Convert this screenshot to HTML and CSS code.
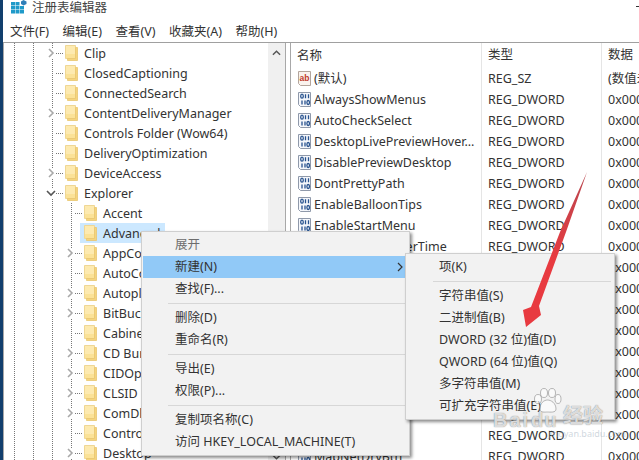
FILE: index.html
```html
<!DOCTYPE html>
<html lang="zh">
<head>
<meta charset="utf-8">
<title>注册表编辑器</title>
<link rel="stylesheet" href="styles.css">
</head>
<body>
<svg class="defs" width="0" height="0">
  <symbol id="folder" viewBox="0 0 13 16">
    <path d="M0.5 0.5H10.5V13.5H0.5Z" fill="#fdeab0" stroke="#efd795"/>
    <path d="M10.5 2.5H12.5V15.5H2.5V13.5H10.5Z" fill="#f5d47e" stroke="#e8c670" stroke-width="0.8"/>
    <path d="M1 9H10V13H1Z" fill="#fbe297"/>
  </symbol>
  <symbol id="bin" viewBox="0 0 15 17">
    <path d="M1.5 1.5H13.5V15.5H3.5L1.5 13.5Z" fill="#f5f7fb" stroke="#8f99aa"/>
    <g fill="none" stroke="#27528e" stroke-width="1.3">
      <ellipse cx="5" cy="5.2" rx="1.3" ry="2"/>
      <path d="M8.5 3.2V7.2M11.5 3.2V7.2"/>
      <path d="M5 9.6V13.4M8 9.6V13.4"/>
      <ellipse cx="11.2" cy="11.5" rx="1.3" ry="2"/>
    </g>
  </symbol>
  <symbol id="str" viewBox="0 0 15 17">
    <path d="M1.5 1.5H13.5V15.5H3.5L1.5 13.5Z" fill="#faf3ee" stroke="#b3a59c"/>
    <text x="7.5" y="10.5" class="ab-text" text-anchor="middle">ab</text>
  </symbol>
</svg>

<div class="strip"></div>
<div class="window">
  <header class="titlebar">
    <svg class="app-icon" width="16" height="14" viewBox="0 0 16 14">
      <path d="M0 2H4V5.5H0ZM4.5 2H8.5V5.5H4.5ZM0 6H4V9.5H0ZM4.5 6H8.5V9.5H4.5ZM9 6H13V9.5H9ZM0 10H4V13.5H0ZM4.5 10H8.5V13.5H4.5ZM9 10H13V13.5H9Z" fill="#1f9ac9"/>
      <path d="M10 1.5L12.5 0L15.5 1.5V4L12.5 5.5L10 4Z" fill="#2f7fb8"/>
    </svg>
    <span class="title">注册表编辑器</span>
    <span class="minimize"></span>
  </header>
  <nav class="menubar">
    <span>文件(F)</span><span>编辑(E)</span><span>查看(V)</span><span>收藏夹(A)</span><span>帮助(H)</span>
  </nav>
  <main class="panes">
    <section class="treepane">
      <div class="tree">
        <div class="row l1"><svg class="exp" viewBox="0 0 10 10"><path d="M3 1L7 5L3 9"/></svg><i class="dots"></i><svg class="folder"><use href="#folder"/></svg><span>Clip</span></div>
        <div class="row l1"><i class="exp"></i><i class="dots"></i><svg class="folder"><use href="#folder"/></svg><span>ClosedCaptioning</span></div>
        <div class="row l1"><i class="exp"></i><i class="dots"></i><svg class="folder"><use href="#folder"/></svg><span>ConnectedSearch</span></div>
        <div class="row l1"><svg class="exp" viewBox="0 0 10 10"><path d="M3 1L7 5L3 9"/></svg><i class="dots"></i><svg class="folder"><use href="#folder"/></svg><span>ContentDeliveryManager</span></div>
        <div class="row l1"><i class="exp"></i><i class="dots"></i><svg class="folder"><use href="#folder"/></svg><span>Controls Folder (Wow64)</span></div>
        <div class="row l1"><i class="exp"></i><i class="dots"></i><svg class="folder"><use href="#folder"/></svg><span>DeliveryOptimization</span></div>
        <div class="row l1"><svg class="exp" viewBox="0 0 10 10"><path d="M3 1L7 5L3 9"/></svg><i class="dots"></i><svg class="folder"><use href="#folder"/></svg><span>DeviceAccess</span></div>
        <div class="row l1"><svg class="exp open" viewBox="0 0 10 10"><path d="M1 3L5 7L9 3"/></svg><i class="dots"></i><svg class="folder"><use href="#folder"/></svg><span>Explorer</span></div>
        <div class="row l2"><i class="exp"></i><i class="dots"></i><svg class="folder"><use href="#folder"/></svg><span>Accent</span></div>
        <div class="row l2 selected"><i class="exp"></i><i class="dots"></i><svg class="folder"><use href="#folder"/></svg><span>Advanced</span></div>
        <div class="row l2"><svg class="exp" viewBox="0 0 10 10"><path d="M3 1L7 5L3 9"/></svg><i class="dots"></i><svg class="folder"><use href="#folder"/></svg><span>AppContract</span></div>
        <div class="row l2"><i class="exp"></i><i class="dots"></i><svg class="folder"><use href="#folder"/></svg><span>AutoComplete</span></div>
        <div class="row l2"><svg class="exp" viewBox="0 0 10 10"><path d="M3 1L7 5L3 9"/></svg><i class="dots"></i><svg class="folder"><use href="#folder"/></svg><span>AutoplayHandlers</span></div>
        <div class="row l2"><svg class="exp" viewBox="0 0 10 10"><path d="M3 1L7 5L3 9"/></svg><i class="dots"></i><svg class="folder"><use href="#folder"/></svg><span>BitBucket</span></div>
        <div class="row l2"><i class="exp"></i><i class="dots"></i><svg class="folder"><use href="#folder"/></svg><span>CabinetState</span></div>
        <div class="row l2"><svg class="exp" viewBox="0 0 10 10"><path d="M3 1L7 5L3 9"/></svg><i class="dots"></i><svg class="folder"><use href="#folder"/></svg><span>CD Burning</span></div>
        <div class="row l2"><svg class="exp" viewBox="0 0 10 10"><path d="M3 1L7 5L3 9"/></svg><i class="dots"></i><svg class="folder"><use href="#folder"/></svg><span>CIDOpen</span></div>
        <div class="row l2"><svg class="exp" viewBox="0 0 10 10"><path d="M3 1L7 5L3 9"/></svg><i class="dots"></i><svg class="folder"><use href="#folder"/></svg><span>CLSID</span></div>
        <div class="row l2"><svg class="exp" viewBox="0 0 10 10"><path d="M3 1L7 5L3 9"/></svg><i class="dots"></i><svg class="folder"><use href="#folder"/></svg><span>ComDlg32</span></div>
        <div class="row l2"><i class="exp"></i><i class="dots"></i><svg class="folder"><use href="#folder"/></svg><span>ControlPanel</span></div>
        <div class="row l2"><svg class="exp" viewBox="0 0 10 10"><path d="M3 1L7 5L3 9"/></svg><i class="dots"></i><svg class="folder"><use href="#folder"/></svg><span>Desktop</span></div>
      </div>
      <div class="scrollbar">
        <svg class="scroll-arrow" viewBox="0 0 10 6"><path d="M1 5L5 1L9 5"/></svg>
        <svg class="scroll-arrow" viewBox="0 0 10 6"><path d="M1 1L5 5L9 1"/></svg>
      </div>
    </section>
    <section class="listpane">
      <div class="lrow head"><div class="c-name">名称</div><div class="c-type">类型</div><div class="c-data">数据</div></div>
      <div class="lrow"><div class="c-name"><svg class="regicon"><use href="#str"/></svg>(默认)</div><div class="c-type">REG_SZ</div><div class="c-data">(数值未设置)</div></div>
      <div class="lrow"><div class="c-name"><svg class="regicon"><use href="#bin"/></svg>AlwaysShowMenus</div><div class="c-type">REG_DWORD</div><div class="c-data">0x00000000 (0)</div></div>
      <div class="lrow"><div class="c-name"><svg class="regicon"><use href="#bin"/></svg>AutoCheckSelect</div><div class="c-type">REG_DWORD</div><div class="c-data">0x00000000 (0)</div></div>
      <div class="lrow"><div class="c-name"><svg class="regicon"><use href="#bin"/></svg>DesktopLivePreviewHover...</div><div class="c-type">REG_DWORD</div><div class="c-data">0x00000000 (0)</div></div>
      <div class="lrow"><div class="c-name"><svg class="regicon"><use href="#bin"/></svg>DisablePreviewDesktop</div><div class="c-type">REG_DWORD</div><div class="c-data">0x00000000 (0)</div></div>
      <div class="lrow"><div class="c-name"><svg class="regicon"><use href="#bin"/></svg>DontPrettyPath</div><div class="c-type">REG_DWORD</div><div class="c-data">0x00000000 (0)</div></div>
      <div class="lrow"><div class="c-name"><svg class="regicon"><use href="#bin"/></svg>EnableBalloonTips</div><div class="c-type">REG_DWORD</div><div class="c-data">0x00000001 (1)</div></div>
      <div class="lrow"><div class="c-name"><svg class="regicon"><use href="#bin"/></svg>EnableStartMenu</div><div class="c-type">REG_DWORD</div><div class="c-data">0x00000001 (1)</div></div>
      <div class="lrow"><div class="c-name"><svg class="regicon"><use href="#bin"/></svg>ExtendedUIHoverTime</div><div class="c-type">REG_DWORD</div><div class="c-data">0x00000190 (400)</div></div>
      <div class="lrow"><div class="c-name"><svg class="regicon"><use href="#bin"/></svg>Filter</div><div class="c-type">REG_DWORD</div><div class="c-data">0x00000000 (0)</div></div>
      <div class="lrow"><div class="c-name"><svg class="regicon"><use href="#bin"/></svg>Hidden</div><div class="c-type">REG_DWORD</div><div class="c-data">0x00000002 (2)</div></div>
      <div class="lrow"><div class="c-name"><svg class="regicon"><use href="#bin"/></svg>HideDrivesWithNoMedia</div><div class="c-type">REG_DWORD</div><div class="c-data">0x00000001 (1)</div></div>
      <div class="lrow"><div class="c-name"><svg class="regicon"><use href="#bin"/></svg>HideFileExt</div><div class="c-type">REG_DWORD</div><div class="c-data">0x00000001 (1)</div></div>
      <div class="lrow"><div class="c-name"><svg class="regicon"><use href="#bin"/></svg>HideIcons</div><div class="c-type">REG_DWORD</div><div class="c-data">0x00000000 (0)</div></div>
      <div class="lrow"><div class="c-name"><svg class="regicon"><use href="#bin"/></svg>IconsOnly</div><div class="c-type">REG_DWORD</div><div class="c-data">0x00000000 (0)</div></div>
      <div class="lrow"><div class="c-name"><svg class="regicon"><use href="#bin"/></svg>LaunchTo</div><div class="c-type">REG_DWORD</div><div class="c-data">0x00000001 (1)</div></div>
      <div class="lrow"><div class="c-name"><svg class="regicon"><use href="#bin"/></svg>ListviewAlphaSelect</div><div class="c-type">REG_DWORD</div><div class="c-data">0x00000001 (1)</div></div>
      <div class="lrow"><div class="c-name"><svg class="regicon"><use href="#bin"/></svg>ListviewShadow</div><div class="c-type">REG_DWORD</div><div class="c-data">0x00000001 (1)</div></div>
      <div class="lrow"><div class="c-name"><svg class="regicon"><use href="#bin"/></svg>MapNetDrvBtn</div><div class="c-type">REG_DWORD</div><div class="c-data">0x00000000 (0)</div></div>
    </section>
  </main>
</div>

<div class="menu context">
  <div class="item muted">展开</div>
  <div class="item active">新建(N)<svg class="caret" viewBox="0 0 6 10"><path d="M1 1L5 5L1 9"/></svg></div>
  <div class="item">查找(F)...</div>
  <div class="sep"></div>
  <div class="item">删除(D)</div>
  <div class="item">重命名(R)</div>
  <div class="sep"></div>
  <div class="item">导出(E)</div>
  <div class="item">权限(P)...</div>
  <div class="sep"></div>
  <div class="item">复制项名称(C)</div>
  <div class="item">访问 HKEY_LOCAL_MACHINE(T)</div>
</div>

<div class="menu submenu">
  <div class="item">项(K)</div>
  <div class="sep"></div>
  <div class="item">字符串值(S)</div>
  <div class="item">二进制值(B)</div>
  <div class="item">DWORD (32 位)值(D)</div>
  <div class="item">QWORD (64 位)值(Q)</div>
  <div class="item">多字符串值(M)</div>
  <div class="item">可扩充字符串值(E)</div>
</div>

<svg class="arrow" width="639" height="460" viewBox="0 0 639 460">
  <defs>
    <linearGradient id="arrowfade" x1="0" y1="172" x2="0" y2="260" gradientUnits="userSpaceOnUse">
      <stop offset="0" stop-color="#b9474f"/>
      <stop offset="1" stop-color="#e83a40"/>
    </linearGradient>
  </defs>
  <path d="M587 172L566 232L539 306L541 315L526 327L523 310L531 307L560 232Z" fill="url(#arrowfade)"/>
</svg>

<div class="watermark">
  <svg class="paw" width="30" height="26" viewBox="0 0 30 26">
    <g fill="#ffffff" fill-opacity="0.6" stroke="#8a8a8a" stroke-opacity="0.6">
      <ellipse cx="6" cy="11" rx="3.5" ry="4.5"/>
      <ellipse cx="12" cy="5" rx="3.5" ry="4.5"/>
      <ellipse cx="20" cy="5" rx="3.5" ry="4.5"/>
      <ellipse cx="26" cy="11" rx="3" ry="4.5"/>
      <path d="M8 21C8 15 12 12 15.5 12C19 12 24 15 24 21C24 25 18 24 15.5 24C13 24 8 25 8 21Z"/>
    </g>
  </svg>
  <span class="wm-text bai">Bai</span>
  <span class="wm-text du">du</span>
  <span class="wm-text jy">经验</span>
  <span class="wm-url">jingyan.baidu.com</span>
</div>
</body>
</html>
```

FILE: styles.css
```css
* { box-sizing: border-box; }

html, body {
  margin: 0;
  height: 460px;
  overflow: hidden;
}

body {
  display: flex;
  position: relative;
  width: 639px;
  background: #fff;
  color: #333;
  font-family: "Noto Sans", "Noto Sans CJK SC", sans-serif;
  font-size: 12.5px;
}

.defs { position: absolute; }

.strip {
  width: 3px;
  flex: none;
  background: #123f6d;
}

.window {
  flex: 1;
  min-width: 0;
  height: 460px;
  display: flex;
  flex-direction: column;
}

.titlebar {
  height: 22px;
  flex: none;
  display: flex;
  align-items: flex-start;
  padding-left: 8px;
}

.app-icon { flex: none; }

.title {
  margin: 1px 0 0 5px;
  line-height: 14px;
  color: #444;
}

.minimize {
  width: 3px;
  height: 1px;
  margin: 6px 0 0 auto;
  background: #333;
}

.menubar {
  height: 20px;
  flex: none;
  display: flex;
  gap: 13.5px;
  padding-left: 7px;
  align-items: center;
  line-height: 20px;
}

.panes {
  flex: 1;
  min-height: 0;
  display: flex;
  border-top: 1px solid #a0a0a0;
}

.treepane {
  width: 283px;
  flex: none;
  display: flex;
  border-left: 1px solid #a8a8a8;
  border-right: 1px solid #a8a8a8;
}

.tree {
  width: 264px;
  flex: none;
  overflow: hidden;
  background-image:
    repeating-linear-gradient(to bottom, #777 0 1px, transparent 1px 2px),
    repeating-linear-gradient(to bottom, #777 0 1px, transparent 1px 2px),
    repeating-linear-gradient(to bottom, #777 0 1px, transparent 1px 2px),
    repeating-linear-gradient(to bottom, #777 0 1px, transparent 1px 2px);
  background-repeat: no-repeat;
  background-size: 1px 100%;
  background-position: 10px 0, 29px 0, 48px 0, 67px 160px;
}

.row {
  height: 20px;
  display: flex;
  align-items: center;
  white-space: nowrap;
}

.l1 { padding-left: 42px; }
.l2 { padding-left: 61px; }

.exp {
  width: 10px;
  height: 10px;
  flex: none;
  background: #fff;
}

.exp path {
  fill: none;
  stroke: #a8a8a8;
  stroke-width: 1.6;
}

.exp.open path { stroke: #555; }

i.exp { background: none; }

.dots {
  width: 8px;
  height: 1px;
  flex: none;
  background: repeating-linear-gradient(to right, #777 0 1px, transparent 1px 2px);
}

.folder {
  width: 13px;
  height: 16px;
  flex: none;
  margin: 0 6px 0 1px;
}

.selected {
  margin-left: 76px;
  padding-left: 0;
  width: 85px;
  background: #cce8ff;
  overflow: hidden;
}

.selected .exp, .selected .dots { display: none; }
.selected .folder { margin-left: 4px; }

.scrollbar {
  width: 17px;
  flex: none;
  background: #f0f0f0;
  display: flex;
  flex-direction: column;
  justify-content: space-between;
  padding: 7px 0 0;
  align-items: center;
}

.scroll-arrow {
  width: 9px;
  height: 6px;
  flex: none;
}

.scroll-arrow path {
  fill: none;
  stroke: #555;
  stroke-width: 1.6;
}

.listpane {
  margin-left: 4px;
  flex: 1;
  min-width: 0;
  border-left: 1px solid #a8a8a8;
  overflow: hidden;
}

.lrow {
  display: flex;
  height: 21px;
  white-space: nowrap;
  line-height: 21px;
}

.lrow.head {
  height: 25px;
  line-height: 24px;
}

.c-name {
  width: 190px;
  flex: none;
  display: flex;
  align-items: center;
  padding-left: 6px;
}

.c-type {
  width: 120px;
  flex: none;
  padding-left: 6px;
  border-left: 1px solid #e5e5e5;
}

.c-data {
  flex: none;
  width: 120px;
  padding-left: 6px;
  border-left: 1px solid #e5e5e5;
}

.regicon {
  width: 15px;
  height: 17px;
  flex: none;
  margin-right: 2px;
}

.ab-text {
  font-family: "Liberation Sans", sans-serif;
  font-size: 8.5px;
  font-weight: 700;
  fill: #c0392b;
}

.menu {
  position: absolute;
  display: flex;
  flex-direction: column;
  padding: 2px 1px;
  background: #f2f2f2;
  border: 1px solid #cfcfcf;
  box-shadow: 2px 2px 3px rgba(0, 0, 0, 0.45);
  color: #333;
}

.context {
  left: 141px;
  top: 231px;
  width: 269px;
  height: 225px;
}

.submenu {
  left: 405px;
  top: 253px;
  width: 210px;
  height: 167px;
}

.item {
  height: 22px;
  line-height: 22px;
  padding-left: 32px;
  white-space: nowrap;
  display: flex;
  align-items: center;
  flex: none;
}

.muted { color: #6d6d6d; }

.active { background: #91c9f7; }

.caret {
  width: 6px;
  height: 10px;
  margin-left: auto;
  margin-right: 5px;
}

.caret path {
  fill: none;
  stroke: #333;
  stroke-width: 1.2;
}

.sep {
  height: 7px;
  flex: none;
  margin-left: 25px;
  display: flex;
  align-items: center;
}

.sep::after {
  content: "";
  width: 100%;
  height: 1px;
  background: #d7d7d7;
}

.submenu .sep { margin: 0 2px 0 26px; }

.arrow {
  position: absolute;
  left: 0;
  top: 0;
}

.watermark {
  position: absolute;
  left: 490px;
  top: 385px;
  width: 120px;
  height: 60px;
}

.paw {
  position: absolute;
  left: 42px;
  top: 3px;
}

.wm-text {
  position: absolute;
  font-family: "Liberation Sans", "Noto Sans CJK SC", sans-serif;
  font-weight: 700;
  font-size: 20px;
  line-height: 20px;
  color: rgba(255, 255, 255, 0.75);
  text-shadow: 0 0 1px rgba(90, 90, 90, 0.9);
}

.bai { left: 3px; top: 25px; letter-spacing: 2px; }
.du { left: 41px; top: 25px; letter-spacing: 1px; }
.jy { left: 73px; top: 21px; }

.wm-url {
  position: absolute;
  left: 58px;
  top: 44px;
  font-size: 9px;
  line-height: 10px;
  color: rgba(160, 175, 190, 0.5);
}
```
